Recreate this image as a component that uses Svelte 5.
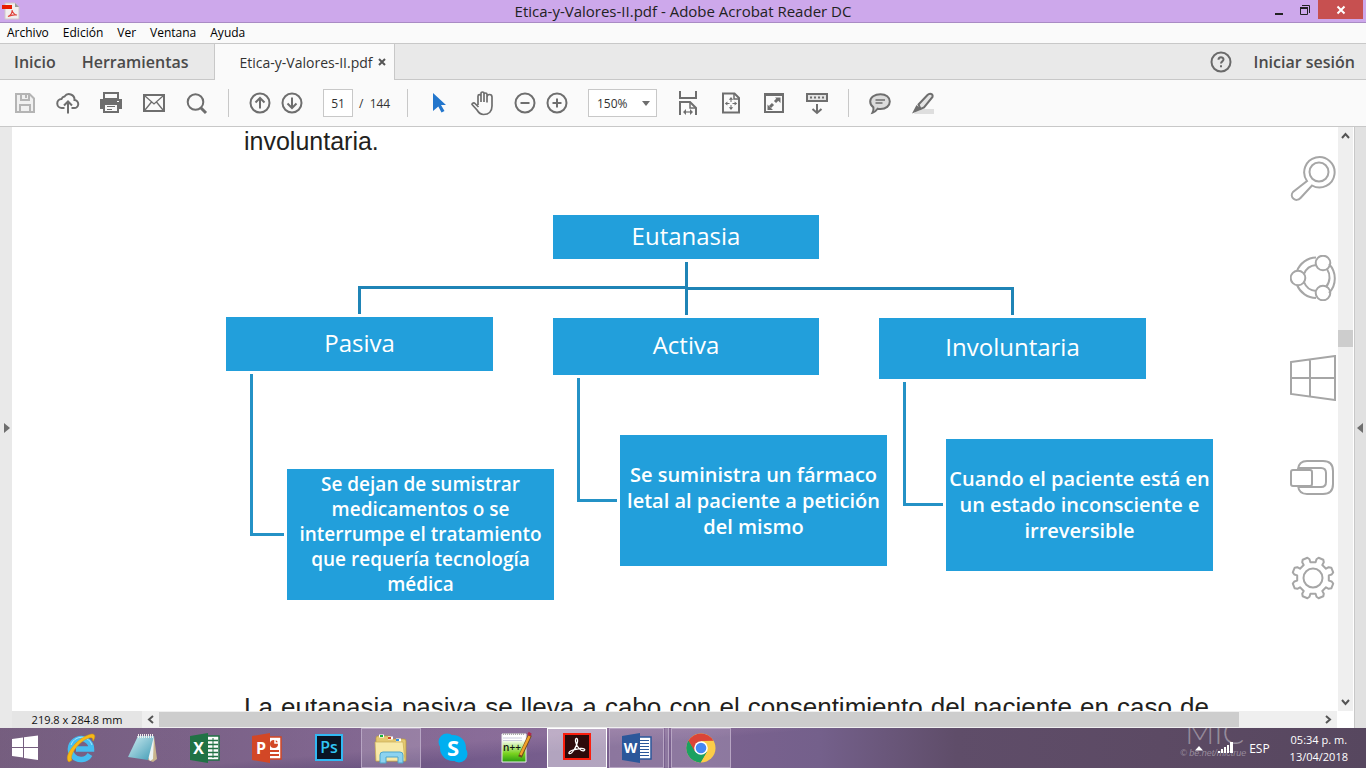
<script>
  const menus = ['Archivo', 'Edición', 'Ver', 'Ventana', 'Ayuda'];

  const nodes = [
    { x: 327, y: 58, w: 266, h: 44, text: 'Eutanasia', head: true },
    { x: 0, y: 160, w: 267, h: 54, text: 'Pasiva', head: true },
    { x: 327, y: 161, w: 266, h: 57, text: 'Activa', head: true },
    { x: 653, y: 161, w: 267, h: 61, text: 'Involuntaria', head: true },
    { x: 61, y: 312, w: 267, h: 131, small: true, lines: ['Se dejan de sumistrar', 'medicamentos o se', 'interrumpe el tratamiento', 'que requería tecnología', 'médica'] },
    { x: 394, y: 278, w: 267, h: 131, lines: ['Se suministra un fármaco', 'letal al paciente a petición', 'del mismo'] },
    { x: 720, y: 282, w: 267, h: 132, lines: ['Cuando el paciente está en', 'un estado inconsciente e', 'irreversible'] }
  ];

  let page = $state('51');
  let zoom = $state('150%');

  const gear = (() => {
    const pts = [];
    for (let i = 0; i < 8; i++) {
      for (const [r, d] of [[16, -13], [19, -12], [21, -7], [21, 7], [19, 12], [16, 13]]) {
        const a = ((i * 45 + 22.5 + d) * Math.PI) / 180;
        pts.push(`${(23 + r * Math.cos(a)).toFixed(1)},${(23 + r * Math.sin(a)).toFixed(1)}`);
      }
    }
    return pts.join(' ');
  })();
</script>

<div class="screen">
  <header class="titlebar">
    <svg class="pdf" width="18" height="18" viewBox="0 0 18 18" aria-hidden="true">
      <path d="M3 1h10l4 4v12H3z" fill="#f1eeee" stroke="#cfc8c8" stroke-width="1" />
      <path d="M13 1v4h4z" fill="#9a9a9a" />
      <path d="M0 3h10v4H0z" fill="#e81c00" />
      <path d="M6 14.500c3-1 4.500-4 4-6.500 .5 3 3 5 5 5-3-.5-6 0-9 1.500z" fill="none" stroke="#e0443a" stroke-width="1.200" />
    </svg>
    <h1>Etica-y-Valores-II.pdf - Adobe Acrobat Reader DC</h1>
    <div class="winbtns">
      <button aria-label="Minimizar"><svg width="10" height="12"><path d="M1 10h8" stroke="#222" stroke-width="2" /></svg></button>
      <button aria-label="Restaurar"><svg width="12" height="12" fill="none" stroke="#222"><path d="M3 1.500h7.500V9" /><path d="M1.500 4.500h7v6h-7z" /><path d="M1 4h8" stroke-width="2" /></svg></button>
      <button class="close" aria-label="Cerrar"><svg width="10" height="10" stroke="#fff" stroke-width="2"><path d="M1.500 1.500l7 7M8.500 1.500l-7 7" /></svg></button>
    </div>
  </header>

  <nav class="menubar">
    {#each menus as m}<button>{m}</button>{/each}
  </nav>

  <div class="tabs">
    <button class="main">Inicio</button>
    <button class="main tools">Herramientas</button>
    <div class="doc-tab">
      <span>Etica-y-Valores-II.pdf</span>
      <button aria-label="Cerrar pestaña"><svg width="8" height="8" stroke="#555" stroke-width="2"><path d="M1 1l6 6M7 1l-6 6" /></svg></button>
    </div>
    <div class="account">
      <button aria-label="Ayuda"><svg width="22" height="22" viewBox="0 0 22 22" fill="none" stroke="#6a6a6a" stroke-width="2"><circle cx="11" cy="11" r="9.500" /><path d="M8.500 8.800c0-3.400 5-3.200 5-.3 0 1.900-2.500 1.900-2.500 4" /><path d="M11 14.200v2" /></svg></button>
      <button class="signin">Iniciar sesión</button>
    </div>
  </div>

  <div class="toolbar">
    <div class="group">
      <button aria-label="Guardar"><svg width="24" height="24" viewBox="0 0 24 24" fill="none" stroke="#b4b4b4" stroke-width="2"><path d="M3 3h13.500L21 7.500V21H3z" fill="#f0f0f0" /><path d="M8 3v6h8V3M13 4v3M7 21v-7h10v7" /></svg></button>
      <button aria-label="Compartir"><svg width="24" height="24" viewBox="0 0 24 24" fill="none" stroke="#6e6e6e" stroke-width="2"><path d="M8.500 17H6a4.500 4.500 0 0 1-.5-9 4 4 0 0 1 3-2.500 5.500 5.500 0 0 1 10 3.500 4 4 0 0 1-.5 8h-2.500M12 22.500V11M8 14.500l4-4 4 4" /></svg></button>
      <button aria-label="Imprimir"><svg width="24" height="24" viewBox="0 0 24 24"><path d="M4 1h16v7H4z" fill="#6e6e6e" /><path d="M6 3h12v4H6z" fill="#fafafa" /><path d="M1 8h22v10H1z" fill="#6e6e6e" /><path d="M5 13h14v8H5z" fill="#fafafa" stroke="#6e6e6e" stroke-width="2" /><path d="M8 15.500h8M8 18.500h5" stroke="#6e6e6e" /><path d="M18 10.500h2" stroke="#fff" /></svg></button>
      <button aria-label="Correo"><svg width="24" height="24" viewBox="0 0 24 24" fill="none" stroke="#6e6e6e"><path d="M2 4h20v16H2z" stroke-width="2" /><path d="M3 5l9 8 9-8M3 19l6.500-8M21 19l-6.500-8" stroke-width="1.300" /></svg></button>
      <button aria-label="Buscar"><svg width="24" height="24" viewBox="0 0 24 24" fill="none" stroke="#6e6e6e" stroke-width="2"><circle cx="10.500" cy="11" r="7.800" /><path d="M16 17l5 5" stroke-width="3" /></svg></button>
    </div>
    <span class="sep"></span>
    <div class="group tight">
      <button aria-label="Página anterior"><svg width="24" height="24" viewBox="0 0 24 24" fill="none" stroke="#6e6e6e" stroke-width="2"><circle cx="12" cy="12" r="9.500" /><path d="M12 17.500V7M7.500 11.500L12 7l4.500 4.500" /></svg></button>
      <button aria-label="Página siguiente"><svg width="24" height="24" viewBox="0 0 24 24" fill="none" stroke="#6e6e6e" stroke-width="2"><circle cx="12" cy="12" r="9.500" /><path d="M12 6.500V17M7.500 12.500L12 17l4.500-4.500" /></svg></button>
    </div>
    <label class="pages"><input aria-label="Página" bind:value={page} /><span>/&nbsp; 144</span></label>
    <span class="sep"></span>
    <div class="group">
      <button aria-label="Selección"><svg width="24" height="24" viewBox="0 0 24 24"><path d="M6 2l13 12h-5l3.500 6-3 1.500-3.200-6L6 20z" fill="#2376cc" /></svg></button>
      <button aria-label="Mano"><svg width="26" height="26" viewBox="0 0 26 26" fill="none" stroke="#6e6e6e" stroke-width="1.700"><path d="M9 15V6.200a1.500 1.500 0 0 1 3 0V12 3.500a1.500 1.500 0 0 1 3 0V12 4.500a1.500 1.500 0 0 1 3 0V12.500V7a1.500 1.500 0 0 1 5 0V16c0 5-3 8.500-8.500 8.500-3.500 0-5-2-6.500-4.500L3 14.500c0-1.500 2-2 3-1L9.500 17" /></svg></button>
      <div class="group tight">
        <button aria-label="Alejar"><svg width="24" height="24" viewBox="0 0 24 24" fill="none" stroke="#6e6e6e" stroke-width="2"><circle cx="12" cy="12" r="9.500" /><path d="M7.500 12h9" /></svg></button>
        <button aria-label="Acercar"><svg width="24" height="24" viewBox="0 0 24 24" fill="none" stroke="#6e6e6e" stroke-width="2"><circle cx="12" cy="12" r="9.500" /><path d="M7.500 12h9M12 7.500v9" /></svg></button>
      </div>
    </div>
    <div class="zoom">
      <select aria-label="Nivel de zoom" bind:value={zoom}><option>100%</option><option>150%</option><option>200%</option></select>
    </div>
    <div class="group">
      <button aria-label="Ajustar al ancho"><svg width="24" height="26" viewBox="0 0 24 26" fill="none" stroke="#6e6e6e" stroke-width="2"><path d="M4 1v7h16V1" /><path d="M4 25V12h10l6 6v7" /><path d="M14 12v6h6" stroke-width="1.500" /><path d="M8 22h8" stroke-width="1.200" /><path d="M10 19v6l-3-3zM14 19v6l3-3z" fill="#6e6e6e" stroke="none" /></svg></button>
      <button aria-label="Ajustar página"><svg width="24" height="24" viewBox="0 0 24 24" fill="none" stroke="#6e6e6e" stroke-width="2"><path d="M4 2.500h11.500L20 7v14.500H4z" /><path d="M15 3v5h5" stroke-width="1.500" /><path d="M12 8v3M12 14v3M7.500 12.500h3M13.500 12.500h3" stroke-width="1" /><path d="M12 6l2.200 2.700H9.800zM12 19l2.200-2.700H9.800zM5.800 12.500l2.600-2v4zM18.200 12.500l-2.600-2v4z" fill="#6e6e6e" stroke="none" /></svg></button>
      <button aria-label="Pantalla completa"><svg width="24" height="24" viewBox="0 0 24 24" fill="none" stroke="#6e6e6e" stroke-width="2"><path d="M3 3h18v18H3zM3 4h18" /><path d="M13 11l3-3M8 16l3-3" stroke-width="3" /><path d="M13 6.500h5.500V12zM5.500 13.500V19H11z" fill="#6e6e6e" stroke="none" /></svg></button>
      <button aria-label="Barra de lectura"><svg width="24" height="24" viewBox="0 0 24 24" fill="none" stroke="#6e6e6e" stroke-width="2"><path d="M2 3h20v7H2z" fill="#e4e4e4" /><path d="M5 6.500h14" stroke-dasharray="2 2" /><path d="M12 13v9M7.500 18l4.500 4 4.500-4" /></svg></button>
    </div>
    <span class="sep"></span>
    <div class="group">
      <button aria-label="Comentario"><svg width="24" height="24" viewBox="0 0 24 24" stroke="#6e6e6e"><path d="M12.500 3.200c5.500 0 9.300 3 9.300 7.300s-3.800 7.500-9.300 7.500c-1 0-2-.1-2.900-.3-1.600 2.300-3.600 3.600-5.100 4 .8-1.600 1.200-3.600.9-5.300C3.600 15.100 2.200 13 2.200 10.500c0-4.300 4.500-7.300 10.300-7.300z" fill="#dcdcdc" stroke-width="2" /><path d="M7.500 9h9.500M7.500 12h7" stroke-width="1.500" /></svg></button>
      <button aria-label="Resaltar"><svg width="26" height="24" viewBox="0 0 26 24"><path d="M7 18h17v5H4z" fill="#dedede" /><path d="M8.500 13.500l9-9.500c2-2 6-1.500 5 2l-8.500 10.500-3.500 1.500z" fill="#e4e4e4" stroke="#6e6e6e" stroke-width="2" /><path d="M6.500 14l5 4.500L8 20l-6 2.500z" fill="#6e6e6e" /></svg></button>
    </div>
  </div>

  <main class="workspace">
    <button class="rail left" aria-label="Mostrar panel izquierdo"><svg width="7" height="12"><path d="M1 1l6 5-6 5z" fill="#6e6e6e" /></svg></button>
    <div class="viewer">
      <div class="view-row">
        <article class="page">
          <p>involuntaria.</p>
          <div class="diagram">
            <svg width="988" height="534" fill="none" stroke="#1f84b6" stroke-width="3" aria-hidden="true">
              <path d="M460.500 105v53M460 130.500H133.500V157M460 131.500h326.500V158" />
              <g stroke="#2492c6"><path d="M25.500 217v160.500H58M352.500 221v122.500H391M678.500 225v122.500H717" /></g>
            </svg>
            {#each nodes as n}
              <div class="node" class:head={n.head} class:small={n.small} style="left:{n.x}px;top:{n.y}px;width:{n.w}px;height:{n.h}px">
                {#if n.head}{n.text}{:else}{#each n.lines as l}<span>{l}</span>{/each}{/if}
              </div>
            {/each}
          </div>
          <p class="full">La eutanasia pasiva se lleva a cabo con el consentimiento del paciente en caso de</p>
        </article>
        <div class="vscroll">
          <button aria-label="Subir"><svg width="9" height="7" fill="none" stroke="#555" stroke-width="2"><path d="M1 6l3.500-4L8 6" /></svg></button>
          <div class="vtrack"><div class="vthumb"></div></div>
          <button aria-label="Bajar"><svg width="9" height="7" fill="none" stroke="#555" stroke-width="2"><path d="M1 1l3.500 4L8 1" /></svg></button>
        </div>
      </div>
      <div class="status">
        <span class="size">219.8 x 284.8 mm</span>
        <button aria-label="Izquierda"><svg width="7" height="9" fill="none" stroke="#555" stroke-width="2"><path d="M6 1L2 4.500 6 8" /></svg></button>
        <div class="htrack"><div class="hthumb"></div></div>
        <button aria-label="Derecha"><svg width="7" height="9" fill="none" stroke="#555" stroke-width="2"><path d="M1 1l4 3.500L1 8" /></svg></button>
        <span class="corner"></span>
      </div>
      <nav class="charms" aria-label="Accesos">
        <button aria-label="Buscar"><svg width="46" height="46" viewBox="0 0 46 46"><circle cx="29" cy="17" r="9.500" /><path d="M17 26A15.200 15.200 0 1 1 22 30.500L10.500 43C6 48 -1 42 3 37z" /></svg></button>
        <button aria-label="Compartir"><svg width="46" height="46" viewBox="0 0 46 46"><path d="M7 16A21 21 0 0 1 26 2.500M39 9a21 21 0 0 1 0 29M26 43A21 21 0 0 1 7 30M14 19a14 14 0 0 1 12-9M37 14a15 15 0 0 1-1 18M26 36a14 14 0 0 1-12-9" /><circle cx="8" cy="23" r="7.300" /><circle cx="33" cy="8" r="7.300" /><circle cx="33" cy="38" r="7.300" /></svg></button>
        <button aria-label="Inicio"><svg width="46" height="46" viewBox="0 0 46 46"><path d="M1 7l44-6v44L1 39zM20 4v38M1 23h44" /></svg></button>
        <button aria-label="Dispositivos"><svg width="46" height="46" viewBox="0 0 46 46"><path d="M8 14q1-8 9-8h16q10 0 10 10v13q0 10-10 10H17q-8 0-9-8" /><path d="M9 13h22q5 0 5 5v9q0 5-5 5H9" /><rect x="1" y="15" width="21" height="16" rx="2" fill="#fff" /></svg></button>
        <button aria-label="Configuración"><svg width="46" height="46" viewBox="0 0 46 46"><polygon points={gear} stroke-linejoin="round" /><circle cx="23" cy="23" r="9.500" /></svg></button>
      </nav>
    </div>
    <button class="rail right" aria-label="Mostrar panel derecho"><svg width="7" height="12"><path d="M6 1L0 6l6 5z" fill="#6e6e6e" /></svg></button>
  </main>

  <footer class="taskbar">
    <button class="start" aria-label="Inicio"><svg width="28" height="26" viewBox="0 0 28 26" fill="#fff"><path d="M1 4l11-1.500V12H1zM13 2.300L27 .5V12H13zM1 13h11v9.500L1 21zM13 13h14v12l-14-2z" /></svg></button>
    <button class="app" aria-label="Internet Explorer"><svg width="32" height="32" viewBox="0 0 32 32"><path d="M25 22.500A10.500 10.500 0 1 1 26.500 17H11" fill="none" stroke="#45bdf0" stroke-width="5.500" /><path d="M27 13A11 11 0 0 0 6 13" fill="none" stroke="#a7e6ff" stroke-width="1" /><path d="M4 30C-3 25 13 4 27 2c4 0 3 4 1 7 0-3-1-4-4-3C14 9 4 23 7 28z" fill="#f7b916" stroke="#d99a0b" stroke-width=".5" /></svg></button>
    <button class="app" aria-label="Bloc de notas"><svg width="32" height="32" viewBox="0 0 32 32"><defs><linearGradient id="pad" x1="0" y1="0" x2="1" y2="1"><stop offset="0" stop-color="#d2eef2" /><stop offset="1" stop-color="#3f9bb5" /></linearGradient></defs><path d="M27 4l3 23-4 3-5-2z" fill="#c9b58d" /><path d="M10 4h17l-1 23-3 2z" fill="#ecf2f3" /><path d="M11 4h16l-6 24L1 25z" fill="url(#pad)" /><path d="M11 4h16" stroke="#eee" stroke-width="4" stroke-dasharray="1 1" /></svg></button>
    <button class="app" aria-label="Excel"><svg width="32" height="32" viewBox="0 0 32 32"><path d="M17 4h13v24H17z" fill="#fff" stroke="#207245" stroke-width="1.500" /><path d="M19 8.500h10M19 12.500h10M19 16.500h10M19 20.500h10M19 24.500h10" stroke="#207245" stroke-width="1.500" /><path d="M24 6v20" stroke="#207245" /><path d="M1 4l18-3v30L1 28z" fill="#207245" /><text x="9.500" y="22" fill="#fff">X</text></svg></button>
    <button class="app" aria-label="PowerPoint"><svg width="32" height="32" viewBox="0 0 32 32"><path d="M17 5h13v22H17z" fill="#fff" stroke="#d24726" stroke-width="1.500" /><circle cx="23" cy="12" r="4" fill="#d24726" /><path d="M24 7v4h4" stroke="#fff" stroke-width="1.500" fill="none" /><path d="M19 19h9M19 23h9" stroke="#d24726" stroke-width="2" /><path d="M1 4l18-3v30L1 28z" fill="#d24726" /><text x="10" y="22" fill="#fff">P</text></svg></button>
    <button class="app" aria-label="Photoshop"><svg width="32" height="32" viewBox="0 0 32 32"><path d="M3 3h26v25H3z" fill="#0a1424" stroke="#31b9f3" stroke-width="2" /><text x="16" y="21" fill="#31c5f4" style="font-weight:600">Ps</text></svg></button>
    <button class="app open" aria-label="Explorador"><svg width="34" height="32" viewBox="0 0 34 32"><path d="M2 6q0-2 2-2h12l2 3h12q2 0 2 2v20H2z" fill="#e4c870" stroke="#b99a3c" stroke-width=".7" /><path d="M5 4h5M14 6h5M22 8h5" stroke="#fff" stroke-width="3" /><path d="M6 4h3" stroke="#14b43c" stroke-width="2" /><path d="M14 6h3" stroke="#d34b26" stroke-width="2" /><path d="M22 8h3" stroke="#3290e6" stroke-width="2" /><path d="M1 10h28l2 19H2z" fill="#f8e9a8" stroke="#c9ae56" stroke-width=".7" /><path d="M6 31V23q0-3 3-3h17q3 0 3 3v8h-5v-6H12v6z" fill="#8cd3f0" stroke="#4fa5cb" /></svg></button>
    <button class="app" aria-label="Skype"><svg width="32" height="32" viewBox="0 0 32 32"><circle cx="10" cy="10" r="8.500" fill="#00aff0" /><circle cx="22" cy="22" r="8.500" fill="#00aff0" /><circle cx="16" cy="16" r="13" fill="#00aff0" /><text x="16" y="24" fill="#fff" style="font-size:22px">S</text></svg></button>
    <button class="app" aria-label="Notepad++"><svg width="34" height="34" viewBox="0 0 34 34"><defs><linearGradient id="npp" x1="0" y1="0" x2="0" y2="1"><stop offset=".2" stop-color="#fff" /><stop offset=".7" stop-color="#79d21e" /><stop offset="1" stop-color="#279c10" /></linearGradient></defs><path d="M4 3h24v28H4z" fill="url(#npp)" stroke="#eee" /><path d="M5 3h22" stroke="#aaa" stroke-width="2" stroke-dasharray="1 1" /><path d="M5 7h19M5 9.500h19" stroke="#ccd" /><text x="14" y="20" style="font-size:10px;font-weight:600" fill="#111">n++</text><path d="M32 4L22 26" stroke="#6e4a1c" stroke-width="4" /><path d="M31.500 5l-9 19" stroke="#f2a22a" stroke-width="2.500" /><path d="M30 2l3 2" stroke="#b02a4a" stroke-width="3" /></svg></button>
    <button class="app active" aria-label="Acrobat Reader"><svg width="32" height="32" viewBox="0 0 32 32"><path d="M3 2h26v25H3z" fill="#2d0a0a" stroke="#fa1e0e" stroke-width="2" /><path d="M8 21.500c-1-2.500 6-4.500 11-5 4-.5 6 1 4 2.200-3 1.300-8-5-8.500-9.500-.3-4 2.500-3.500 2 .5-.6 4.500-5.500 13-8.500 11.800z" fill="none" stroke="#fff" stroke-width="1.300" /></svg></button>
    <div class="stack">
      <button class="app open" aria-label="Word"><svg width="32" height="32" viewBox="0 0 32 32"><path d="M17 5h13v22H17z" fill="#fff" stroke="#2b579a" stroke-width="1.500" /><path d="M19 8.500h9M19 11.500h9M19 14.500h9M19 17.500h9M19 20.500h9M19 23.500h9" stroke="#2b579a" /><path d="M1 4l18-3v30L1 28z" fill="#2b579a" /><text x="9.500" y="21" fill="#fff" style="font-size:14px">W</text></svg></button>
      <span></span>
    </div>
    <button class="app open" aria-label="Chrome"><svg width="32" height="32" viewBox="0 0 32 32"><circle cx="16" cy="16" r="14.500" fill="#fccd48" /><path d="M16 16L3.450 8.750A14.500 14.500 0 0 1 28.550 8.750L16 9z" fill="#db4437" /><path d="M3.450 8.750A14.500 14.500 0 0 0 15.500 30.500L22 19.500 16 22 10 19z" fill="#1ba160" /><path d="M3.450 8.750L10 20l6-4V9h13z" fill="#db4437" /><path d="M3.450 8.750L9.800 19.500 16 22l6-2.500-6.500 11A14.500 14.500 0 0 1 3.450 8.750z" fill="#1ba160" /><circle cx="16" cy="16" r="6.800" fill="#fff" /><circle cx="16" cy="16" r="5.300" fill="#4587f4" /></svg></button>
    <div class="tray">
      <div class="brand"><span class="mic">MIC</span><span class="tag">© be.net/mictrue</span></div>
      <button class="up" aria-label="Iconos ocultos"><svg width="8" height="5"><path d="M4 0l4 4.500H0z" fill="#fff" /></svg></button>
      <button aria-label="Red"><svg width="16" height="12" fill="#fff"><path d="M0 9h2v2H0zM3 7h2v4H3zM6 5h2v6H6zM9 3h2v8H9zM12 0h3v11h-3z" /></svg></button>
      <span class="lang">ESP</span>
      <div class="clock"><span>05:34 p. m.</span><span>13/04/2018</span></div>
    </div>
  </footer>
</div>

<style>
  :global(body) { margin: 0; }
  .screen { display: flex; flex-direction: column; height: 100vh; overflow: hidden; background: #fff; font-family: "Open Sans", "Noto Sans", sans-serif; color: #222; }
  button { display: flex; align-items: center; justify-content: center; margin: 0; padding: 0; border: 0; background: none; font: inherit; color: inherit; }
  svg { display: block; flex: none; }

  .titlebar { position: relative; display: flex; align-items: center; box-sizing: border-box; height: 23px; flex: none; background: #cda8eb; border-bottom: 1px solid #a98bc4; }
  .pdf { margin-left: 2px; }
  h1 { flex: 1; margin: 0 0 0 -20px; text-align: center; font-size: 15px; line-height: 22px; font-weight: 400; }
  .winbtns { position: absolute; right: 3px; top: 0; display: flex; }
  .winbtns button { width: 26px; height: 19px; }
  .winbtns .close { width: 45px; background: #c75050; }

  .menubar { display: flex; box-sizing: border-box; height: 21px; flex: none; padding-left: 7px; gap: 14px; background: #fafafa; border-bottom: 1px solid #c8c8c8; font-size: 12px; line-height: 20px; color: #000; }

  .tabs { display: flex; box-sizing: border-box; height: 36px; flex: none; background: #e9e9e9; border-bottom: 1px solid #c8c8c8; }
  .main, .signin { font-size: 16px; font-weight: 600; color: #4b4b4b; }
  .main { margin-left: 14px; }
  .tools { margin-left: 26px; }
  .doc-tab { display: flex; align-items: center; gap: 5px; margin: 0 0 -1px 25px; padding: 0 8px 0 25px; background: #fafafa; border: solid #c8c8c8; border-width: 0 1px; font-size: 14px; color: #333; }
  .account { display: flex; align-items: center; gap: 22px; margin-left: auto; padding-right: 11px; }

  .toolbar { display: flex; align-items: center; box-sizing: border-box; height: 47px; flex: none; padding-left: 9px; background: #fafafa; border-bottom: 1px solid #c8c8c8; }
  .group { display: flex; gap: 11px; }
  .tight { gap: 0; }
  .group button { width: 32px; height: 32px; }
  .sep { width: 1px; height: 28px; margin: 0 15px; background: #c8c8c8; }
  .pages { display: flex; align-items: center; gap: 6px; width: 69px; margin-left: 15px; font-size: 12px; color: #333; white-space: nowrap; }
  .pages input { box-sizing: border-box; width: 30px; height: 28px; padding: 0; border: 1px solid #c8c8c8; background: #fff; text-align: center; font: inherit; color: inherit; }
  .zoom { position: relative; margin: 0 15px; }
  .zoom::after { content: ""; position: absolute; right: 7px; top: 12px; border: 4px solid transparent; border-top: 5px solid #6e6e6e; border-bottom: 0; pointer-events: none; }
  .zoom select { display: block; box-sizing: border-box; width: 69px; height: 28px; padding: 0 8px; appearance: none; border: 1px solid #c8c8c8; border-radius: 0; background: #fff; font: inherit; font-size: 12px; color: #333; }

  .workspace { display: flex; flex: 1; min-height: 0; }
  .rail { flex: none; box-sizing: border-box; width: 12px; background: #e9e9e9; }
  .rail.right { background: #e1e1e1; border-left: 1px solid #c8c8c8; }
  .viewer { position: relative; display: flex; flex-direction: column; flex: 1; min-width: 0; }
  .view-row { display: flex; flex: 1; min-height: 0; }
  .page { flex: 1; min-width: 0; overflow: hidden; background: #fff; }
  .page p { margin: 0 0 0 232px; font-family: "Liberation Sans", Arial, sans-serif; font-size: 25px; line-height: 28px; white-space: nowrap; color: #231f20; }
  .page .full { width: 965px; font-size: 26px; white-space: normal; text-align: justify; text-align-last: justify; }
  .diagram { position: relative; width: 988px; height: 534px; margin: 2px 0 2px 214px; }
  .node { position: absolute; box-sizing: border-box; display: flex; flex-direction: column; align-items: center; justify-content: center; background: #229fdb; color: #fff; font-family: "Open Sans", sans-serif; font-size: 20px; line-height: 26px; font-weight: 600; white-space: nowrap; }
  .node.small { font-size: 19px; line-height: 25px; }
  .node.head { padding-bottom: 3px; font-size: 24px; font-weight: 400; }

  .vscroll { display: flex; flex-direction: column; width: 15px; margin-right: 1px; background: #efefef; }
  .vscroll button { height: 17px; }
  .vtrack { flex: 1; display: flex; flex-direction: column; }
  .vthumb { height: 17px; margin-top: 186px; background: #cdcdcd; }
  .status { display: flex; height: 17px; flex: none; background: #efefef; }
  .size { width: 130px; background: #e5e5e5; text-align: center; font-size: 11px; line-height: 17px; color: #111; }
  .status button { width: 17px; }
  .htrack { flex: 1; }
  .hthumb { width: 93%; height: 15px; background: #cdcdcd; margin-top: 1px; }
  .corner { width: 17px; background: #fff; }
  .charms { position: absolute; right: 18px; top: 28px; display: flex; flex-direction: column; gap: 54px; }
  .charms svg { fill: none; stroke: #a6a6a6; stroke-width: 2; }

  .taskbar { display: flex; flex: none; gap: 2px; height: 40px; overflow: hidden; background: linear-gradient(175deg, #c79fc040 45%, #6a559000 60%) 0 0 / 930px 40px no-repeat, linear-gradient(90deg, #5a4869 0, #65507a 20%, #745b8b 35%, #7b6290 52%, #74608b 60%, #5f4d69 70%, #5c4a64 85%, #57475f 100%); color: #fff; }
  .start { width: 49px; }
  .app { box-sizing: border-box; width: 60px; height: 40px; border: 1px solid transparent; }
  .app text { font-family: "Open Sans", sans-serif; font-size: 16px; font-weight: 700; text-anchor: middle; }
  .open { border-color: #b7a5c3; background: #ffffff26; }
  .active { border-color: #fff; background: #ffffff70; }
  .stack { display: flex; gap: 1px; width: 60px; }
  .stack .app { width: 55px; }
  .stack span { width: 3px; border-right: 1px solid #b7a5c3; background: #ffffff26; }
  .tray { position: relative; display: flex; align-items: center; gap: 15px; margin-left: auto; padding-right: 18px; font-size: 12px; }
  .brand { position: absolute; left: -15px; top: -12px; display: flex; flex-direction: column; color: #ffffff60; white-space: nowrap; pointer-events: none; }
  .mic { padding-left: 5px; font-family: Lato, sans-serif; font-weight: 300; font-size: 32px; line-height: 32px; }
  .tag { font-family: "Liberation Sans", sans-serif; font-style: italic; font-size: 9px; line-height: 10px; }
  .lang { margin-right: 5px; }
  .clock { display: flex; flex-direction: column; align-items: center; font-size: 11px; line-height: 17px; }
</style>
